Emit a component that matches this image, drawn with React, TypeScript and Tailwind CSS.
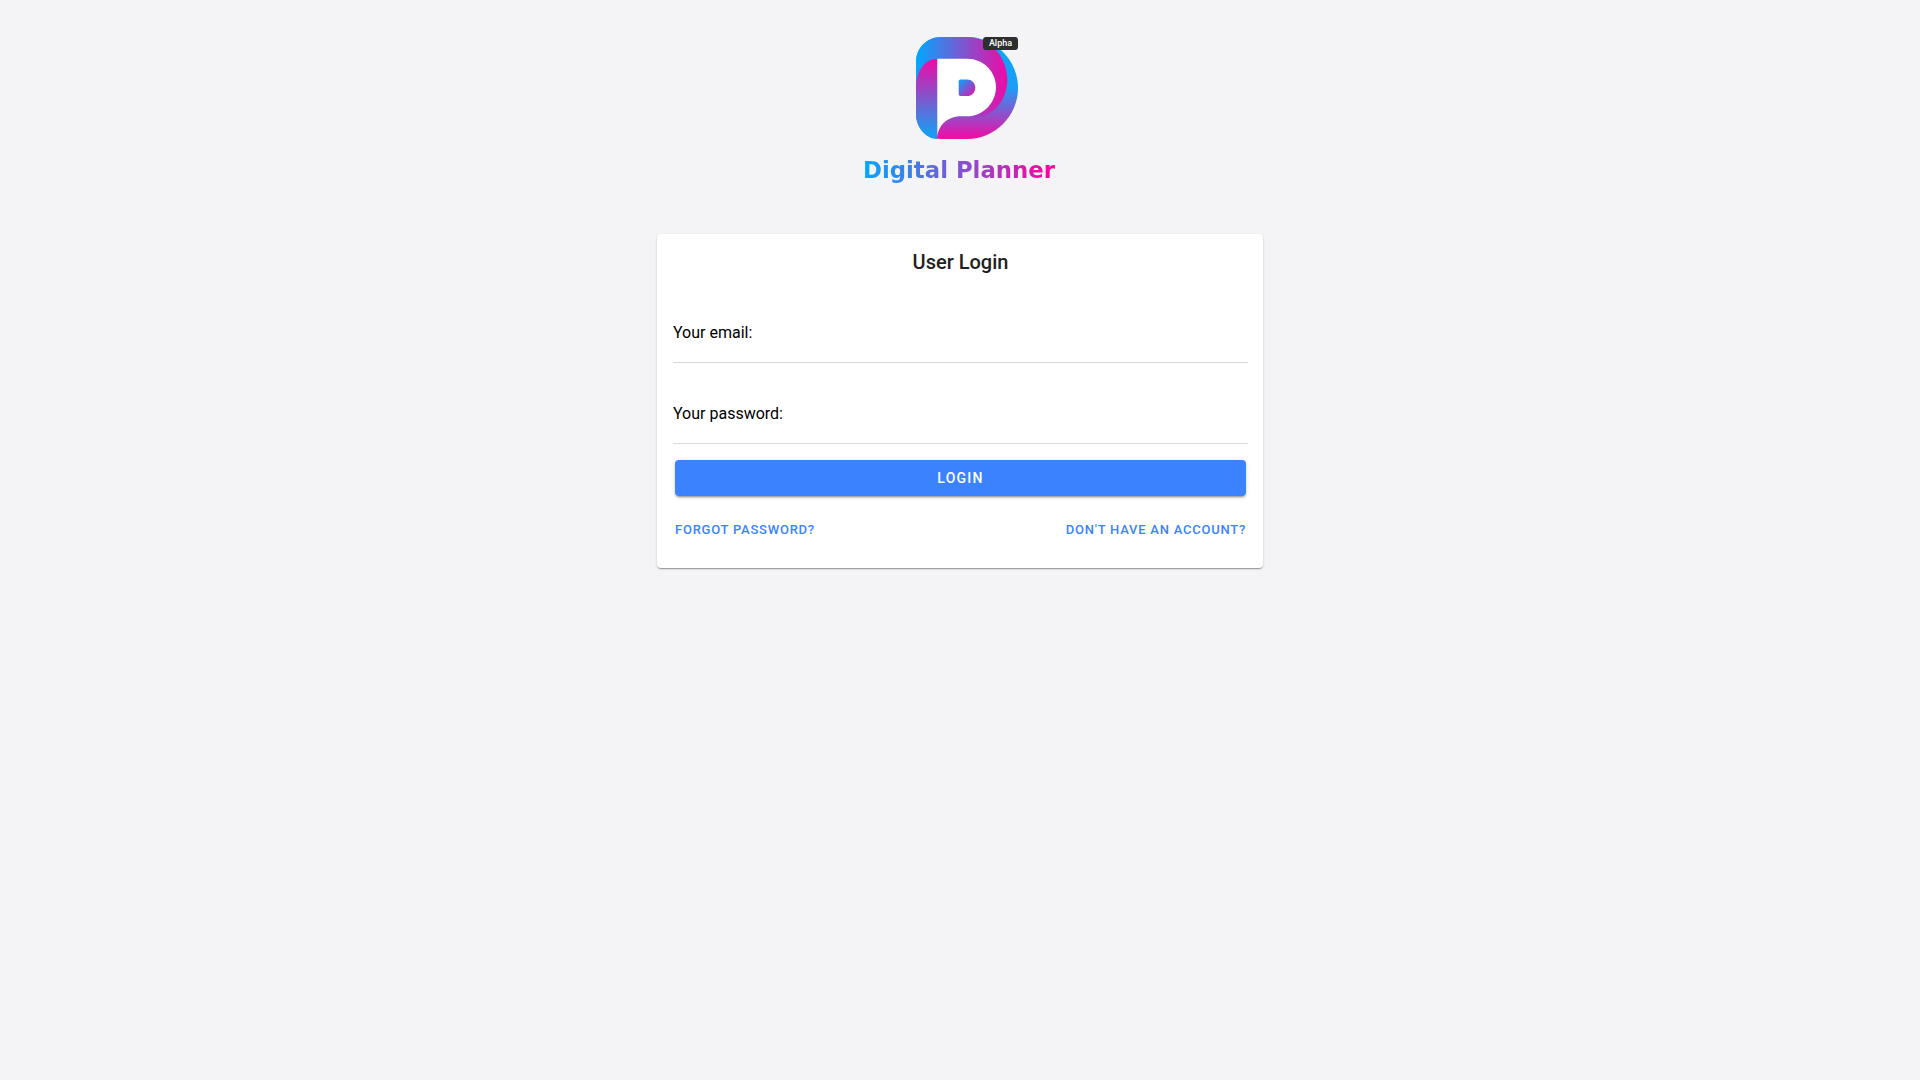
function Logo() {
  return (
    <svg width="104" height="104" viewBox="0 0 104 104" className="block">
      <defs>
        <linearGradient id="outer" gradientUnits="userSpaceOnUse" x1="0" y1="1" x2="0" y2="103">
          <stop offset="0" stopColor="#00a8ff" />
          <stop offset="0.5" stopColor="#1f9cf5" />
          <stop offset="1" stopColor="#f50aa5" />
        </linearGradient>
        <linearGradient id="band" gradientUnits="userSpaceOnUse" x1="1" y1="0" x2="92" y2="0">
          <stop offset="0" stopColor="#00a8ff" />
          <stop offset="1" stopColor="#f00aa5" />
        </linearGradient>
        <linearGradient id="left" gradientUnits="userSpaceOnUse" x1="0" y1="23" x2="0" y2="96">
          <stop offset="0" stopColor="#f00aa5" />
          <stop offset="1" stopColor="#1e9af0" />
        </linearGradient>
        <linearGradient id="inner" x1="0" y1="0" x2="1" y2="1">
          <stop offset="0" stopColor="#00a8ff" />
          <stop offset="1" stopColor="#f00aa5" />
        </linearGradient>
      </defs>
      <path
        d="M1 26C1 12 12 1 26 1H52C80 1 103 24 103 52C103 80 80 103 52 103H26C12 103 1 92 1 78Z"
        fill="url(#outer)"
      />
      <path
        d="M1 26C1 12 12 1 26 1H52C74 1 92.3 20 92.3 44C92.3 62 80 80 62 81H22V60H1Z"
        fill="url(#band)"
      />
      <path d="M22.3 22.7C10 23 1 35 1 51V78C1 92 11 103 22.3 103Z" fill="url(#left)" />
      <path
        d="M22.3 22.7H52C68 22.7 81 35 81 51C81 67 68 80.3 52 80.3H46C32 80.3 22.3 90 22.3 103Z"
        fill="#ffffff"
      />
      <path
        d="M45.5 43.5H52C56.5 43.5 60.3 47 60.3 51.7C60.3 56.5 56.5 60 52 60H45.5C44.5 60 43.7 59.2 43.7 58V45.3C43.7 44.3 44.5 43.5 45.5 43.5Z"
        fill="url(#inner)"
      />
    </svg>
  )
}

export default function App() {
  return (
    <div className="min-h-screen bg-[#f4f4f6] font-['Roboto',sans-serif] pt-9">
      <div className="flex flex-col items-center">
        <div className="relative ml-[14px]">
          <Logo />
          <span className="absolute right-[1px] top-[1px] flex h-[13px] w-[35px] items-center justify-center rounded-[3px] bg-[#2e2e2e] text-[9px] font-medium leading-none text-white">
            Alpha
          </span>
        </div>
        <div className="mr-[2px] mt-[15px] bg-[linear-gradient(90deg,#00a8ff,#ff00a0)] bg-clip-text font-['DejaVu_Sans',sans-serif] text-[22.8px] font-bold leading-[30px] text-transparent">
          Digital Planner
        </div>
      </div>

      <div className="mx-auto mt-[49px] w-[606px] rounded bg-white pb-[28px] pl-4 pr-[15px] pt-[12px] shadow-[0_2px_1px_-1px_rgba(0,0,0,0.2),0_1px_1px_0_rgba(0,0,0,0.14),0_1px_3px_0_rgba(0,0,0,0.12)]">
        <h1 className="text-center text-xl font-medium leading-8 text-[#212121]">User Login</h1>
        <div className="mt-[35px] h-[50px] border-b border-[#d9d9d9] pt-[8px]">
          <label className="block text-base leading-6 text-black">Your email:</label>
        </div>
        <div className="mt-[31px] h-[50px] border-b border-[#d9d9d9] pt-[8px]">
          <label className="block text-base leading-6 text-black">Your password:</label>
        </div>
        <button className="ml-[2px] mt-4 block h-9 w-[571px] rounded bg-[#3b82ff] text-sm font-medium tracking-[1.25px] text-white shadow-[0_3px_1px_-2px_rgba(0,0,0,0.2),0_2px_2px_0_rgba(0,0,0,0.14),0_1px_5px_0_rgba(0,0,0,0.12)]">
          LOGIN
        </button>
        <div className="mx-[2px] mt-[24px] flex justify-between text-[13px] font-medium leading-5 tracking-[0.76px] text-[#3b82ff]">
          <a>FORGOT PASSWORD?</a>
          <a>DON'T HAVE AN ACCOUNT?</a>
        </div>
      </div>
    </div>
  )
}
